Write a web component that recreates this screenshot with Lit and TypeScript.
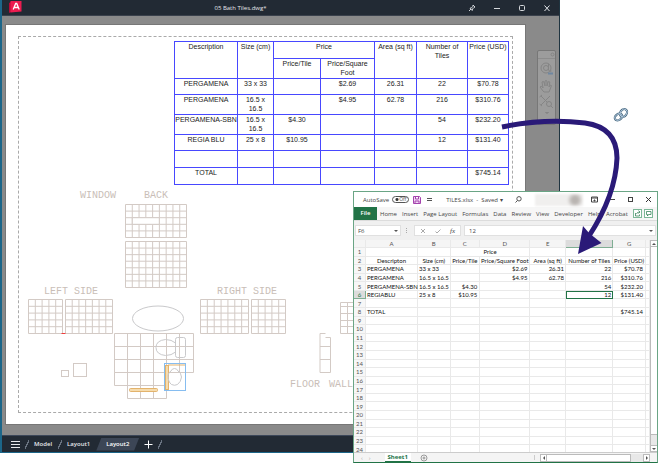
import { LitElement, html, svg, css, nothing } from "lit";
import { customElement } from "lit/decorators.js";
import { classMap } from "lit/directives/class-map.js";

/** Outline of a tiled area: evenly spaced lines in both directions. */
const tiles = (x: number, y: number, w: number, h: number, cols: number, rows: number) => {
  let d = "";
  for (let i = 0; i <= cols; i++) d += `M${x + (w * i) / cols} ${y}v${h}`;
  for (let j = 0; j <= rows; j++) d += `M${x} ${y + (h * j) / rows}h${w}`;
  return svg`<path d=${d}></path>`;
};

@customElement("tile-plan")
class TilePlan extends LitElement {
  static styles = css`
    :host { display: block; }
    svg { display: block; }
    .lines { fill: none; stroke: #d3cac5; stroke-width: 1; }
    .soft { fill: none; stroke: #c9c9cb; stroke-width: 1; }
    .hole { fill: #fff; stroke: #d3cac5; }
    .label { font: 10px "Liberation Mono", monospace; fill: #c9beb7; }
    .orange { fill: #f6dcae; stroke: #e3b36c; }
    .pick { fill: none; stroke: #86bdf0; stroke-width: 1; }
    .red { stroke: #f03c3c; stroke-width: 1; }
  `;
  render() {
    return html`<svg width="519" height="399" viewBox="6 25 519 399">
      <g class="lines">
        ${tiles(125.5, 204.5, 61, 33, 9, 5)} ${tiles(125.5, 241.5, 61, 46, 9, 7)}
        ${tiles(28.5, 299.5, 34, 34, 5, 5)} ${tiles(65.5, 299.5, 47, 34, 7, 5)}
        ${tiles(200.5, 299.5, 48, 34, 7, 5)} ${tiles(251.5, 299.5, 34, 34, 5, 5)}
        ${tiles(114.5, 333.5, 65, 39, 5, 3)} ${tiles(179.5, 333.5, 14, 39, 1, 3)}
        ${tiles(114.5, 372.5, 52, 13, 4, 1)} ${tiles(127.5, 385.5, 39, 13, 3, 1)}
        <path d="M340.5 302.5h14M340.5 306.5h14M340.5 313.5h14M340.5 320.5h14M340.5 326.5h14M340.5 333.5h14M340.5 302.5v31M347.5 302.5v31"></path>
        <path d="M325.5 333.5h-5.500v39h10.500v-35h-5M320 346.500h10.500M320 359.500h10.500"></path>
        <rect x="61.500" y="370.500" width="7" height="6"></rect>
        <rect x="73.500" y="363.500" width="13" height="13"></rect>
      </g>
      <rect class="hole" x="132.300" y="217.700" width="27" height="6.600"></rect>
      <g class="soft">
        <ellipse cx="158" cy="318.500" rx="25.500" ry="12.500"></ellipse>
        <rect x="175.500" y="337.500" width="10" height="20" rx="2"></rect>
        <path d="M175.500 343q-4-3.500-10-3.500q-9.500 1-9.500 8q0 7 9.500 8q6 0 10-3.500"></path>
      </g>
      <path class="red" d="M61.500 333.500h4"></path>
      <rect class="orange" x="129.500" y="388.500" width="28" height="3" rx="1"></rect>
      <rect class="orange" x="165.500" y="365.500" width="3" height="24"></rect>
      <path class="orange" d="M168 365h17"></path>
      <path class="soft" d="M168 375q1-3 3-4q1-2.500 3.500-2.500t3.500 2.500q3 1.500 3.500 6q-.5 5-4 7.500q-3 1.500-6 0q-3.500-2.500-3.500-9.500z"></path>
      <rect class="pick" x="164.500" y="363.500" width="21" height="27"></rect>
      <g class="label">
        <text x="80" y="198">WINDOW</text><text x="144" y="198">BACK</text>
        <text x="44" y="294">LEFT SIDE</text><text x="217" y="294">RIGHT SIDE</text>
        <text x="290" y="387">FLOOR</text><text x="329" y="387">WALL</text>
      </g>
    </svg>`;
  }
}

@customElement("cad-window")
class CadWindow extends LitElement {
  static styles = css`
    :host { display: flex; flex-direction: column; box-sizing: border-box; border-left: 2px solid #1c6689; border-right: 1px solid #1f3440; border-bottom: 1px solid #1c6689; background: #222a34; font: 6px/8px "Open Sans", sans-serif; }
    button { all: unset; box-sizing: border-box; display: block; }
    svg { display: block; }
    .title { height: 16px; display: grid; grid-template-columns: 90px 1fr 90px; align-items: center; color: #e6e8ec; border-bottom: 1px solid #3a414c; box-sizing: border-box; }
    .name { text-align: center; padding-right: 80px; font-size: 6px; font-weight: 400; margin: 0; }
    .logo { margin-left: 7px; }
    .controls { display: flex; justify-content: flex-end; gap: 17px; padding-right: 8px; }
    .work { flex: 1; background: #8a8a8a; display: flex; gap: 12px; padding: 9px 3px 11px 4px; align-items: flex-start; }
    .sheet { flex: 1; min-width: 0; height: 399px; box-sizing: border-box; background: #fff; position: relative; padding: 11px 12px; box-shadow: 0 0 0 1px #777; }
    .plan { position: absolute; left: 0; top: 0; }
    .frame { height: 100%; box-sizing: border-box; border: 1px dashed #aaa; padding: 4px 3px 0; position: relative; }
    table { margin-left: auto; border-collapse: collapse; table-layout: fixed; width: 335px; font: 7px/9px "Liberation Sans", sans-serif; color: #222; text-align: center; background: #fff; }
    th, td { border: 1px solid #4848ff; padding: 0; vertical-align: top; font-weight: 400; white-space: nowrap; }
    .c63 { width: 63px; } .c36 { width: 36px; } .c47 { width: 47px; } .c54 { width: 54px; } .c42 { width: 42px; } .c51 { width: 51px; }
    .h16 { height: 16px; } .h17 { height: 17px; } .h20 { height: 20px; }
    .nav { width: 19px; height: 75px; margin-top: 25px; box-sizing: border-box; border: 1px solid #777; border-radius: 2px; background: #9c9c9c; }
    .tabs { height: 17px; box-sizing: border-box; border-top: 1px solid #3c4759; display: flex; align-items: center; color: #e6e8eb; font-weight: 600; }
    .menu { padding: 0 5px 0 9px; }
    .tab { height: 13px; line-height: 13px; padding: 0 6px 0 5px; }
    .slash { width: 4px; height: 9px; background: linear-gradient(115deg, transparent 42%, #6a7482 43% 57%, transparent 58%); }
    .active { width: 43px; padding: 0; text-align: center; color: #fff; background: #3c4656; clip-path: polygon(12% 0, 100% 0, 88% 100%, 0 100%); }
    .add { padding: 0 5px; }
  `;
  rows = [
    ["h16", "PERGAMENA", "33 x 33", "", "$2.69", "26.31", "22", "$70.78"],
    ["h20", "PERGAMENA", "16.5 x|16.5", "", "$4.95", "62.78", "216", "$310.76"],
    ["h20", "PERGAMENA-SBN", "16.5 x|16.5", "$4.30", "", "", "54", "$232.20"],
    ["h16", "REGIA BLU", "25 x 8", "$10.95", "", "", "12", "$131.40"],
    ["h17", "", "", "", "", "", "", ""],
    ["h17", "TOTAL", "", "", "", "", "", "$745.14"],
  ];
  lines(t: string) {
    return t.split("|").map((p, i) => html`${i ? html`<br />` : nothing}${p}`);
  }
  render() {
    return html`
      <header class="title">
        <svg class="logo" width="13" height="13" viewBox="0 0 13 13"><path fill="#b80b39" d="M0 2l2-1v10l-2 1z"></path><path fill="#ec1c50" d="M1.500 0h11v10.500l-11 1z"></path><path d="M4.200 8.500L6.700 2.500h1l2.500 6M5.300 6.500h3.800" fill="none" stroke="#fff" stroke-width="1.300"></path></svg>
        <h1 class="name">05 Bath Tiles.dwg*</h1>
        <div class="controls">
          <button aria-label="Pin"><svg width="8" height="8" viewBox="0 0 8 8" fill="none" stroke="#d5d8dc"><path d="M5 1l2 2-1 .500-1.500 1.500-.300 1.500L2 4.200l1.500-.300L5 2.200zM3 5L1 7"></path></svg></button>
          <button aria-label="Minimize"><svg width="8" height="8" viewBox="0 0 8 8" fill="none" stroke="#d5d8dc"><path d="M1 4.500h6"></path></svg></button>
          <button aria-label="Maximize"><svg width="8" height="8" viewBox="0 0 8 8" fill="none" stroke="#d5d8dc"><rect x="1.500" y="1.500" width="5" height="5" rx="1"></rect></svg></button>
          <button aria-label="Close"><svg width="8" height="8" viewBox="0 0 8 8" fill="none" stroke="#e5e8ec"><path d="M1.500 1.500l5 5.500M6.500 1.500l-5 5.500"></path></svg></button>
        </div>
      </header>
      <main class="work">
        <div class="sheet">
          <tile-plan class="plan"></tile-plan>
          <div class="frame">
            <table>
              <colgroup><col class="c63" /><col class="c36" /><col class="c47" /><col class="c54" /><col class="c42" /><col class="c51" /><col /></colgroup>
              <thead>
                <tr class="h17"><th rowspan="2">Description</th><th rowspan="2">Size (cm)</th><th colspan="2">Price</th><th rowspan="2">Area (sq ft)</th><th rowspan="2">Number of<br />Tiles</th><th rowspan="2">Price (USD)</th></tr>
                <tr class="h20"><th>Price/Tile</th><th>Price/Square<br />Foot</th></tr>
              </thead>
              <tbody>${this.rows.map(([h, ...cells]) => html`<tr class=${h}>${cells.map((c) => html`<td>${this.lines(c)}</td>`)}</tr>`)}</tbody>
            </table>
          </div>
        </div>
        <aside class="nav">
          <svg width="17" height="73" viewBox="0 0 17 73" fill="none" stroke="#858585">
            <path d="M0 7.500h17" stroke="#8c8c8c"></path><circle cx="14.500" cy="3.500" r="1.500"></circle>
            <circle cx="8" cy="17" r="5"></circle><circle cx="8" cy="17" r="2.500"></circle><path d="M10.500 13v6q1 2 3 1"></path><path d="M10 22.500h5" stroke="#6f87a0" stroke-width="2"></path>
            <path d="M5 40l-3-4q1-1.500 2.500 0l.500 1-1-6q1-1 2 0l1 4V30q1-1 2 0v5l1-4q1-1 1.800 0L11 36l1.500-2q1.500 0 .500 2l-2 5H6z"></path>
            <path d="M3 45l9 9M12 45l-9 9M1.500 46l2.500-2M1.500 53l2.500 2"></path><circle cx="11" cy="53" r="2.500" fill="#9c9c9c"></circle><path d="M13 55l2 2"></path>
            <path d="M7.500 61.500h3l-1.500 1z"></path>
          </svg>
        </aside>
      </main>
      <nav class="tabs">
        <button class="menu" aria-label="Layouts"><svg width="9" height="9" viewBox="0 0 9 9" stroke="#e8eaed"><path d="M0 1.500h9M0 4.500h9M0 7.500h9"></path></svg></button>
        <span class="slash"></span><button class="tab">Model</button>
        <span class="slash"></span><button class="tab">Layout1</button>
        <button class="tab active">Layout2</button>
        <button class="add" aria-label="New layout"><svg width="9" height="9" viewBox="0 0 9 9" stroke="#fff"><path d="M.500 4.500h8M4.500 .500v8"></path></svg></button>
        <span class="slash"></span>
      </nav>`;
  }
}

@customElement("sheet-window")
class SheetWindow extends LitElement {
  static styles = css`
    :host { display: flex; flex-direction: column; box-sizing: border-box; background: #fff; border: 1px solid #6aa585; border-bottom: 1px solid #217346; font: 6px/8px "Open Sans", sans-serif; color: #444; overflow: hidden; }
    button, input { all: unset; box-sizing: border-box; display: block; }
    svg { display: block; }
    .title { height: 15px; display: flex; align-items: center; padding: 0 5px 0 9px; white-space: nowrap; }
    .auto { display: flex; align-items: center; gap: 3px; }
    .switch { width: 17px; height: 7px; border: 1px solid #555; border-radius: 4px; background: radial-gradient(circle at 4px 50%, #333 0 1px, transparent 2px), #fff; }
    .toggle { display: grid; }
    .toggle > * { grid-area: 1 / 1; }
    .off { font-size: 5px; line-height: 7px; padding-left: 7px; z-index: 1; }
    .save { margin-left: 4px; }
    .more { margin: 0 14px 0 6px; }
    .find { margin-left: 12px; }
    .user { width: 48px; height: 12px; margin-left: 13px; background: radial-gradient(circle at 40px 50%, #b9b4b1 0 3px, transparent 8px), #f0efee; filter: blur(1px); }
    .win { margin-left: auto; display: flex; gap: 11px; }
    .ribbon { height: 13px; display: flex; align-items: center; gap: 5px; background: #f6f6f6; padding-right: 4px; white-space: nowrap; }
    .ribbon button { flex: none; }
    .file { align-self: stretch; width: 23px; text-align: center; line-height: 13px; background: #217346; color: #fff; font-weight: 600; margin-right: -2px; }
    .share { margin-left: auto; display: flex; gap: 2px; }
    .bar { height: 20px; box-sizing: border-box; background: #f0f0f0; border-top: 1px solid #dcdcdc; display: flex; align-items: center; padding: 0 1px; }
    .box { height: 11px; box-sizing: border-box; background: #fff; border: 1px solid #e0e0e0; display: flex; align-items: center; }
    .ref { width: 46px; padding: 0 2px; margin-right: 5px; }
    .ref input { width: 36px; }
    .fns { width: 47px; margin: 0 3px 0 6px; padding: 0 5px; justify-content: space-between; }
    .formula { flex: 1; min-width: 0; padding: 0 2px 0 4px; }
    .formula input { flex: 1; min-width: 0; }
    .fx { font: italic 7px/8px "Liberation Serif", serif; }
    .body { flex: 1; min-height: 0; display: flex; }
    .cells { flex: 1; min-width: 0; overflow: hidden; height: 212px; }
    table { width: 100%; height: 214px; table-layout: fixed; border-spacing: 0; font: 6px/7px Lato, sans-serif; color: #111; }
    th, td { padding: 0 1px; font-weight: 400; white-space: nowrap; border-right: 1px solid #e9e9e9; border-bottom: 1px solid #e9e9e9; overflow: visible; }
    thead th { background: #f5f5f5; color: #555; text-align: center; height: 8px; box-sizing: border-box; }
    .row { background: #f7f7f7; color: #555; text-align: center; }
    .hot { background: #dcdcdc; color: #217346; border-color: #7fae93; }
    .center { text-align: center; padding: 0; }
    .right { text-align: right; }
    .inset { text-align: right; padding-right: 2px; }
    .cur { outline: 1px solid #217346; outline-offset: -1px; }
    .w12 { width: 12px; } .w52 { width: 52px; } .w51 { width: 17%; } .w32 { width: 11%; } .w30 { width: 10%; } .w34 { width: 12%; } .w47 { width: 16%; } .w33 { width: 11%; }
    .vscroll { width: 7px; display: flex; flex-direction: column; background: #e8e8e8; border-left: 1px solid #bbb; box-sizing: border-box; }
    .step { background: #fff; border: 1px solid #bbb; width: 7px; height: 7px; display: grid; place-items: center; }
    .vscroll .step { width: 6px; border-left: 0; border-right: 0; }
    .vthumb { flex: 1; background: #fff; border-bottom: 1px solid #bbb; margin-bottom: 10px; }
    .foot { height: 10px; display: flex; align-items: center; background: #f4f4f4; border-top: 1px solid #ccc; box-sizing: border-box; padding: 0 7px; }
    .turn { display: flex; gap: 6px; color: #aaa; }
    .sheet1 { height: 9px; line-height: 8px; width: 26px; margin-left: 14px; text-align: center; color: #217346; font-weight: 700; background: #fff; border-bottom: 1px solid #217346; }
    .plus { margin-left: 9px; }
    .hscroll { margin-left: auto; width: 38%; display: flex; height: 8px; background: #e8e8e8; }
    .hscroll .step { height: 8px; }
    .hthumb { flex: 1; background: #fff; border: 1px solid #bbb; border-left: 0; margin-right: 12px; box-sizing: border-box; }
    .split { width: 1px; height: 5px; background: #ccc; margin-left: auto; }
    .split + .hscroll { margin-left: 5px; }
  `;
  data: Record<number, string[]> = {
    2: ["Descripton", "Size (cm)", "Price/Tile", "Price/Square Foot", "Area (sq ft)", "Number of Tiles", "Price (USD)"],
    3: ["PERGAMENA", "33 x 33", "", "$2.69", "26.31", "22", "$70.78"],
    4: ["PERGAMENA", "16.5 x 16.5", "", "$4.95", "62.78", "216", "$310.76"],
    5: ["PERGAMENA-SBN", "16.5 x 16.5", "$4.30", "", "", "54", "$232.20"],
    6: ["REGIABLU", "25 x 8", "$10.95", "", "", "12", "$131.40"],
    8: ["TOTAL", "", "", "", "", "", "$745.14"],
  };
  arrow(d: string) {
    return html`<svg width="4" height="4" viewBox="0 0 4 4" fill="#555"><path d=${d}></path></svg>`;
  }
  row(n: number) {
    const head = html`<th class=${classMap({ row: true, hot: n === 6 })}>${n}</th>`;
    if (n === 1) return html`<tr>${head}<td></td><td></td><td class="center" colspan="2">Price</td><td></td><td></td><td></td><td></td></tr>`;
    const cells = this.data[n] ?? ["", "", "", "", "", "", ""];
    return html`<tr>${head}${cells.map((c, i) => html`<td class=${classMap({
      center: n === 2, right: n > 2 && (i === 4 || i === 5), inset: n > 2 && (i === 2 || i === 3 || i === 6), cur: n === 6 && i === 5,
    })}>${c}</td>`)}<td></td></tr>`;
  }
  render() {
    return html`
      <header class="title">
        <label class="auto">AutoSave <span class="toggle"><input class="switch" type="checkbox" /><span class="off">Off</span></span></label>
        <button class="save" aria-label="Save"><svg width="8" height="8" viewBox="0 0 8 8" fill="#f3d8f5" stroke="#a343ad"><path d="M.500 .500h6l1 1v6h-7zM2.500 .500v2.500h3V.500M2 7.500v-2.500h4v2.500"></path></svg></button>
        <button class="more" aria-label="More"><svg width="5" height="5" viewBox="0 0 5 5" stroke="#555"><path d="M0 1.500h5M0 3.500h5"></path></svg></button>
        <span>TILES.xlsx &nbsp;-&nbsp; Saved ▾</span>
        <button class="find" aria-label="Search"><svg width="7" height="7" viewBox="0 0 7 7" fill="none" stroke="#555"><circle cx="4" cy="2.800" r="2.200"></circle><path d="M2.500 4.500L.500 6.500"></path></svg></button>
        <span class="user"></span>
        <div class="win">
          <button aria-label="Ribbon options"><svg width="7" height="7" viewBox="0 0 7 7" fill="none" stroke="#444"><path d="M.500 1v5h6V1zM.500 2h6M3.500 5.500v-2M2.500 4.500h2"></path></svg></button>
          <button aria-label="Minimize"><svg width="7" height="7" viewBox="0 0 7 7" stroke="#444"><path d="M1 3.500h5"></path></svg></button>
          <button aria-label="Maximize"><svg width="7" height="7" viewBox="0 0 7 7" fill="none" stroke="#444"><rect x="1.500" y="1.500" width="4" height="4"></rect></svg></button>
          <button aria-label="Close"><svg width="7" height="7" viewBox="0 0 7 7" stroke="#333"><path d="M1 1l5 5M6 1l-5 5"></path></svg></button>
        </div>
      </header>
      <nav class="ribbon">
        <button class="file">File</button>
        ${["Home", "Insert", "Page Layout", "Formulas", "Data", "Review", "View", "Developer", "Help", "Acrobat"].map((t) => html`<button>${t}</button>`)}
        <div class="share">
          <button aria-label="Share"><svg width="9" height="9" viewBox="0 0 9 9" fill="#fff" stroke="#7db898"><rect x=".500" y=".500" width="8" height="8"></rect><path fill="none" stroke="#217346" stroke-width=".700" d="M2.500 4v3h4V5.500M3.500 5q.500-2 3-2M5.500 1.500L7 3 5.500 4.500"></path></svg></button>
          <button aria-label="Comments"><svg width="9" height="9" viewBox="0 0 9 9" fill="#fff" stroke="#7db898"><rect x=".500" y=".500" width="8" height="8"></rect><path fill="none" stroke="#217346" stroke-width=".700" d="M2.500 2.500h4.500v3H4.500L3.500 7V5.500h-1z"></path></svg></button>
        </div>
      </nav>
      <div class="bar">
        <div class="box ref"><input aria-label="Name box" value="F6" />${this.arrow("M0 1h4L2 3z")}</div>
        <svg width="2" height="6" viewBox="0 0 2 6" fill="#aaa"><path d="M0 0h1v1H0zM0 2h1v1H0zM0 4h1v1H0z"></path></svg>
        <div class="box fns">
          <button aria-label="Cancel"><svg width="6" height="6" viewBox="0 0 6 6" stroke="#aaa"><path d="M1 1l4 4M5 1L1 5"></path></svg></button>
          <button aria-label="Enter"><svg width="6" height="6" viewBox="0 0 6 6" fill="none" stroke="#aaa"><path d="M.500 3.500l1.500 1.500L5.500 1.500"></path></svg></button>
          <button class="fx">fx</button>
        </div>
        <div class="box formula"><input aria-label="Formula" value="12" />${this.arrow("M0 1h4L2 3z")}</div>
      </div>
      <div class="body">
        <div class="cells"><table>
          <colgroup><col class="w12" /><col class="w52" /><col class="w32" /><col class="w30" /><col class="w51" /><col class="w34" /><col class="w47" /><col class="w33" /><col /></colgroup>
          <thead><tr><th></th>${["A", "B", "C", "D", "E", "F", "G", ""].map((c) => html`<th class=${classMap({ hot: c === "F" })}>${c}</th>`)}</tr></thead>
          <tbody>${Array.from({ length: 24 }, (_, i) => this.row(i + 1))}</tbody>
        </table></div>
        <div class="vscroll"><button class="step" aria-label="Scroll up">${this.arrow("M0 3h4L2 1z")}</button><div class="vthumb"></div><button class="step" aria-label="Scroll down">${this.arrow("M0 1h4L2 3z")}</button></div>
      </div>
      <footer class="foot">
        <div class="turn"><button>‹</button><button>›</button></div>
        <button class="sheet1">Sheet1</button>
        <button class="plus" aria-label="New sheet"><svg width="8" height="8" viewBox="0 0 8 8" fill="none" stroke="#777" stroke-width=".700"><circle cx="4" cy="4" r="3"></circle><path d="M2.500 4h3M4 2.500v3"></path></svg></button>
        <span class="split"></span>
        <div class="hscroll"><button class="step" aria-label="Scroll left">${this.arrow("M3 0v4L1 2z")}</button><div class="hthumb"></div><button class="step" aria-label="Scroll right">${this.arrow("M1 0v4L3 2z")}</button></div>
      </footer>`;
  }
}

@customElement("app-root")
class AppRoot extends LitElement {
  static styles = css`
    :host { display: grid; background: #fff; grid-template-columns: minmax(0, 353fr) minmax(0, 207fr) minmax(0, 98fr) 1px; grid-template-rows: 191px 262px 10px; }
    .cad { grid-area: 1 / 1 / 3 / 3; z-index: 0; }
    .excel { grid-area: 2 / 2 / 4 / 4; z-index: 1; }
    .flow { grid-area: 1 / 1 / -1 / -1; width: 100%; height: 100%; pointer-events: none; z-index: 2; }
  `;
  render() {
    return html`
      <cad-window class="cad"></cad-window>
      <sheet-window class="excel"></sheet-window>
      <svg class="flow" viewBox="0 0 659 463" preserveAspectRatio="none">
        <path d="M502 127C531 121 560 120 585 123C607 126 617 138 617 158C616 185 604 213 589 236" fill="none" stroke="#2a1a78" stroke-width="5"></path>
        <path d="M578 254L583 226L589 233L601.500 243Z" fill="#2a1a78"></path>
        <g fill="none">
          <g stroke="#4a6a80" stroke-width="2.200"><ellipse cx="618.500" cy="117" rx="4" ry="3" transform="rotate(-35 618.500 117)"></ellipse><ellipse cx="623.500" cy="113" rx="4.200" ry="3.200" transform="rotate(-55 623.500 113)"></ellipse></g>
          <g stroke="#b4cbe0" stroke-width=".900"><ellipse cx="618.500" cy="117" rx="4" ry="3" transform="rotate(-35 618.500 117)"></ellipse><ellipse cx="623.500" cy="113" rx="4.200" ry="3.200" transform="rotate(-55 623.500 113)"></ellipse></g>
        </g>
      </svg>`;
  }
}
